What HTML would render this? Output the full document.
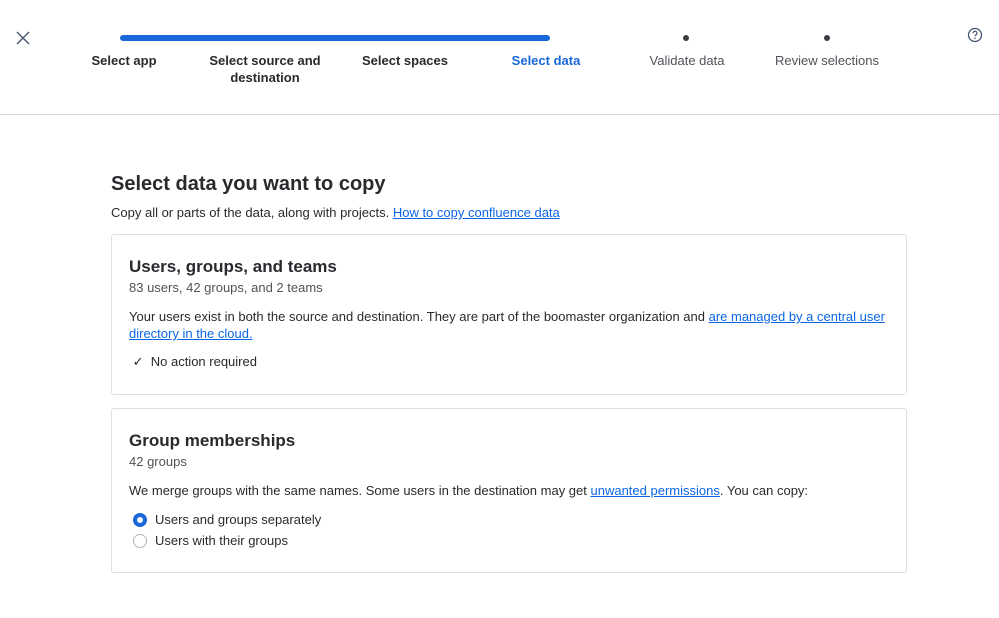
<!DOCTYPE html>
<html><head><style>
body{margin:0;width:999px;height:618px;background:#fff;font-family:"Liberation Sans",sans-serif;color:#172b4d;position:relative;overflow:hidden}
.a{position:absolute}
.step{position:absolute;top:52px;font-size:13px;font-weight:bold;text-align:center;line-height:17px;color:#292a2e}
.gray{font-weight:normal;color:#505258}
.dot{position:absolute;top:35px;width:6px;height:6px;border-radius:50%;background:#3b3d42}
.card{position:absolute;left:111px;width:794px;border:1px solid #dcdfe4;border-radius:3px}
h2{margin:0;font-size:17px;color:#292a2e}
p{margin:0;font-size:13px;color:#292a2e}
a{color:#0c66e4;text-decoration:underline}
.sub{color:#505258;font-size:13px}
</style></head><body>
<svg class="a" style="left:16px;top:31px" width="14" height="14"><path d="M1 1L13 13M13 1L1 13" stroke="#44546f" stroke-width="1.4"/></svg>
<div class="a" style="left:120px;top:35px;width:430px;height:6px;border-radius:3px;background:#1868db"></div>
<div class="step" style="left:74px;width:100px">Select app</div>
<div class="step" style="left:200px;width:130px">Select source and<br>destination</div>
<div class="step" style="left:350px;width:110px">Select spaces</div>
<div class="step" style="left:496px;width:100px;color:#1868db">Select data</div>
<div class="dot" style="left:683px"></div>
<div class="step gray" style="left:637px;width:100px">Validate data</div>
<div class="dot" style="left:824px"></div>
<div class="step gray" style="left:767px;width:120px">Review selections</div>
<svg class="a" style="left:967px;top:27px" width="16" height="16"><circle cx="8" cy="8" r="6.5" fill="none" stroke="#44546f" stroke-width="1.3"/><path d="M6 6.3a2 2 0 1 1 2.5 1.9c-.4.2-.5.5-.5 1.1" fill="none" stroke="#44546f" stroke-width="1.2"/><circle cx="8" cy="11.3" r=".8" fill="#44546f"/></svg>
<div class="a" style="left:0;top:114px;width:999px;height:1px;background:#d0d3d8"></div>
<div class="a" style="left:111px;top:173px"><h2 style="font-size:20px">Select data you want to copy</h2>
<p style="margin-top:9px">Copy all or parts of the data, along with projects. <a>How to copy confluence data</a></p></div>
<div class="card" style="top:234px;height:159px">
<div class="a" style="left:17px;top:22px;width:770px">
<h2>Users, groups, and teams</h2><div class="sub" style="margin-top:3px">83 users, 42 groups, and 2 teams</div>
<p style="margin-top:13px;line-height:17px">Your users exist in both the source and destination. They are part of the boomaster organization and <a>are managed by a central user directory in the cloud.</a></p>
<p style="margin-top:12px">&nbsp;✓&nbsp; No action required</p></div></div>
<div class="card" style="top:408px;height:163px">
<div class="a" style="left:17px;top:22px;width:770px">
<h2>Group memberships</h2><div class="sub" style="margin-top:3px">42 groups</div>
<p style="margin-top:14px">We merge groups with the same names. Some users in the destination may get <a>unwanted permissions</a>. You can copy:</p>
<p style="margin-top:14px;display:flex;align-items:center"><span style="display:inline-block;width:6px;height:6px;border:4px solid #1868db;border-radius:50%;margin:0 8px 0 4px"></span>Users and groups separately</p>
<p style="margin-top:6px;display:flex;align-items:center"><span style="display:inline-block;width:12px;height:12px;border:1px solid #b0b4bb;border-radius:50%;margin:0 8px 0 4px"></span>Users with their groups</p>
</div></div>
</body></html>
